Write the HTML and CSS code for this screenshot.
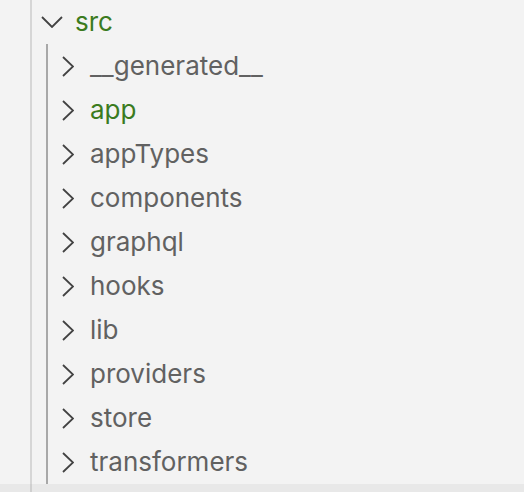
FILE: index.html
```html
<!DOCTYPE html>
<html>
<head>
<meta charset="utf-8">
<link rel="stylesheet" href="styles.css">
</head>
<body>
<div class="panel">
  <div class="level">
    <div class="guide">
      <div class="row root">
        <span class="twistie"><svg width="22" height="12" viewBox="0 0 22 12"><path d="M1 1 L11 11 L21 1" fill="none" stroke="#424242" stroke-width="1.8"/></svg></span>
        <span class="label added">src</span>
      </div>
      <div class="children">
        <div class="row child"><span class="twistie"><svg width="12" height="21" viewBox="0 0 12 21"><path d="M1 1 L11 10.5 L1 20" fill="none" stroke="#424242" stroke-width="1.8"/></svg></span><span class="label">__generated__</span></div>
        <div class="row child"><span class="twistie"><svg width="12" height="21" viewBox="0 0 12 21"><path d="M1 1 L11 10.5 L1 20" fill="none" stroke="#424242" stroke-width="1.8"/></svg></span><span class="label added">app</span></div>
        <div class="row child"><span class="twistie"><svg width="12" height="21" viewBox="0 0 12 21"><path d="M1 1 L11 10.5 L1 20" fill="none" stroke="#424242" stroke-width="1.8"/></svg></span><span class="label">appTypes</span></div>
        <div class="row child"><span class="twistie"><svg width="12" height="21" viewBox="0 0 12 21"><path d="M1 1 L11 10.5 L1 20" fill="none" stroke="#424242" stroke-width="1.8"/></svg></span><span class="label">components</span></div>
        <div class="row child"><span class="twistie"><svg width="12" height="21" viewBox="0 0 12 21"><path d="M1 1 L11 10.5 L1 20" fill="none" stroke="#424242" stroke-width="1.8"/></svg></span><span class="label">graphql</span></div>
        <div class="row child"><span class="twistie"><svg width="12" height="21" viewBox="0 0 12 21"><path d="M1 1 L11 10.5 L1 20" fill="none" stroke="#424242" stroke-width="1.8"/></svg></span><span class="label">hooks</span></div>
        <div class="row child"><span class="twistie"><svg width="12" height="21" viewBox="0 0 12 21"><path d="M1 1 L11 10.5 L1 20" fill="none" stroke="#424242" stroke-width="1.8"/></svg></span><span class="label">lib</span></div>
        <div class="row child"><span class="twistie"><svg width="12" height="21" viewBox="0 0 12 21"><path d="M1 1 L11 10.5 L1 20" fill="none" stroke="#424242" stroke-width="1.8"/></svg></span><span class="label">providers</span></div>
        <div class="row child"><span class="twistie"><svg width="12" height="21" viewBox="0 0 12 21"><path d="M1 1 L11 10.5 L1 20" fill="none" stroke="#424242" stroke-width="1.8"/></svg></span><span class="label">store</span></div>
        <div class="row child"><span class="twistie"><svg width="12" height="21" viewBox="0 0 12 21"><path d="M1 1 L11 10.5 L1 20" fill="none" stroke="#424242" stroke-width="1.8"/></svg></span><span class="label">transformers</span></div>
      </div>
    </div>
  </div>
  <div class="level hover">
    <div class="guide guide-dim"></div>
  </div>
</div>
</body>
</html>
```
FILE: styles.css
```css
html, body {
  margin: 0;
  padding: 0;
  background: #f3f3f3;
}
.panel {
  width: 524px;
  height: 492px;
  overflow: hidden;
  font-family: Inter, "Noto Sans", sans-serif;
  font-size: 26px;
  color: #616161;
}
.level {
  padding-left: 30px;
}
.guide {
  border-left: 2px solid #d6d6d6;
}
.hover {
  background: #e8e8e8;
  height: 20px;
}
.guide-dim {
  height: 100%;
  border-left-color: #cfcfcf;
}
.row {
  display: flex;
  align-items: center;
  height: 44px;
}
.root {
  padding-left: 4px;
}
.root .label {
  margin-left: 7px;
}
.twistie {
  width: 32px;
  height: 44px;
  display: flex;
  align-items: center;
  justify-content: center;
  flex-shrink: 0;
}
.children {
  margin-left: 14px;
  border-left: 2px solid #a8a8a8;
}
.child {
  padding-left: 4px;
}
.child .label {
  margin-left: 6px;
}
.label {
  white-space: nowrap;
  line-height: 44px;
}
.added {
  color: #3b7b1e;
}
```
